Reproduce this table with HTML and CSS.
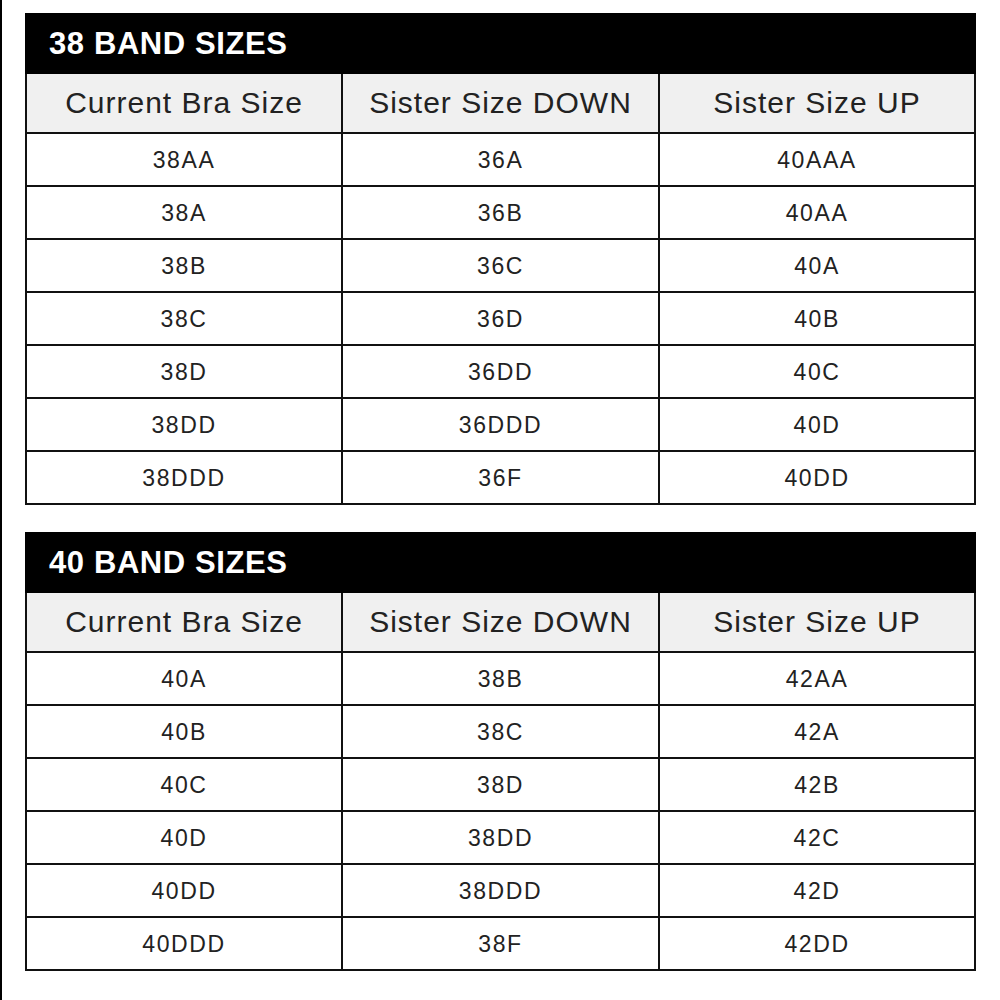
FILE: index.html
```html
<!DOCTYPE html>
<html>
<head>
<meta charset="utf-8">
<link rel="stylesheet" href="styles.css">
</head>
<body>
<div class="page">
  <section class="chart">
    <div class="title">38 BAND SIZES</div>
    <div class="grid">
      <div class="cell head">Current Bra Size</div>
      <div class="cell head">Sister Size DOWN</div>
      <div class="cell head">Sister Size UP</div>
      <div class="cell">38AA</div><div class="cell">36A</div><div class="cell">40AAA</div>
      <div class="cell">38A</div><div class="cell">36B</div><div class="cell">40AA</div>
      <div class="cell">38B</div><div class="cell">36C</div><div class="cell">40A</div>
      <div class="cell">38C</div><div class="cell">36D</div><div class="cell">40B</div>
      <div class="cell">38D</div><div class="cell">36DD</div><div class="cell">40C</div>
      <div class="cell">38DD</div><div class="cell">36DDD</div><div class="cell">40D</div>
      <div class="cell">38DDD</div><div class="cell">36F</div><div class="cell">40DD</div>
    </div>
  </section>
  <section class="chart second">
    <div class="title">40 BAND SIZES</div>
    <div class="grid">
      <div class="cell head">Current Bra Size</div>
      <div class="cell head">Sister Size DOWN</div>
      <div class="cell head">Sister Size UP</div>
      <div class="cell">40A</div><div class="cell">38B</div><div class="cell">42AA</div>
      <div class="cell">40B</div><div class="cell">38C</div><div class="cell">42A</div>
      <div class="cell">40C</div><div class="cell">38D</div><div class="cell">42B</div>
      <div class="cell">40D</div><div class="cell">38DD</div><div class="cell">42C</div>
      <div class="cell">40DD</div><div class="cell">38DDD</div><div class="cell">42D</div>
      <div class="cell">40DDD</div><div class="cell">38F</div><div class="cell">42DD</div>
    </div>
  </section>
</div>
</body>
</html>
```
FILE: styles.css
```css
html, body {
  margin: 0;
  padding: 0;
  background: #fff;
}
.page {
  box-sizing: border-box;
  width: 1000px;
  height: 1000px;
  border-left: 2px solid #000;
  padding: 13px 0 0 23px;
  font-family: "Liberation Sans", Arial, sans-serif;
  color: #222;
}
.chart {
  width: 951px;
}
.chart.second {
  margin-top: 27px;
}
.title {
  height: 61px;
  background: #000;
  color: #fff;
  font-size: 31px;
  font-weight: bold;
  letter-spacing: 0.6px;
  display: flex;
  align-items: center;
  padding-left: 24px;
  box-sizing: border-box;
}
.grid {
  display: grid;
  grid-template-columns: 314px 315px 314px;
  grid-template-rows: 58px;
  grid-auto-rows: 51px;
  gap: 2px;
  padding: 0 2px 2px 2px;
  background: #111;
}
.cell {
  background: #fff;
  display: flex;
  align-items: center;
  justify-content: center;
  padding-top: 2px;
  box-sizing: border-box;
  font-size: 23px;
  letter-spacing: 1.6px;
}
.cell.head {
  background: #f0f0f0;
  padding-top: 0;
  font-size: 30px;
  letter-spacing: 1px;
}
```
